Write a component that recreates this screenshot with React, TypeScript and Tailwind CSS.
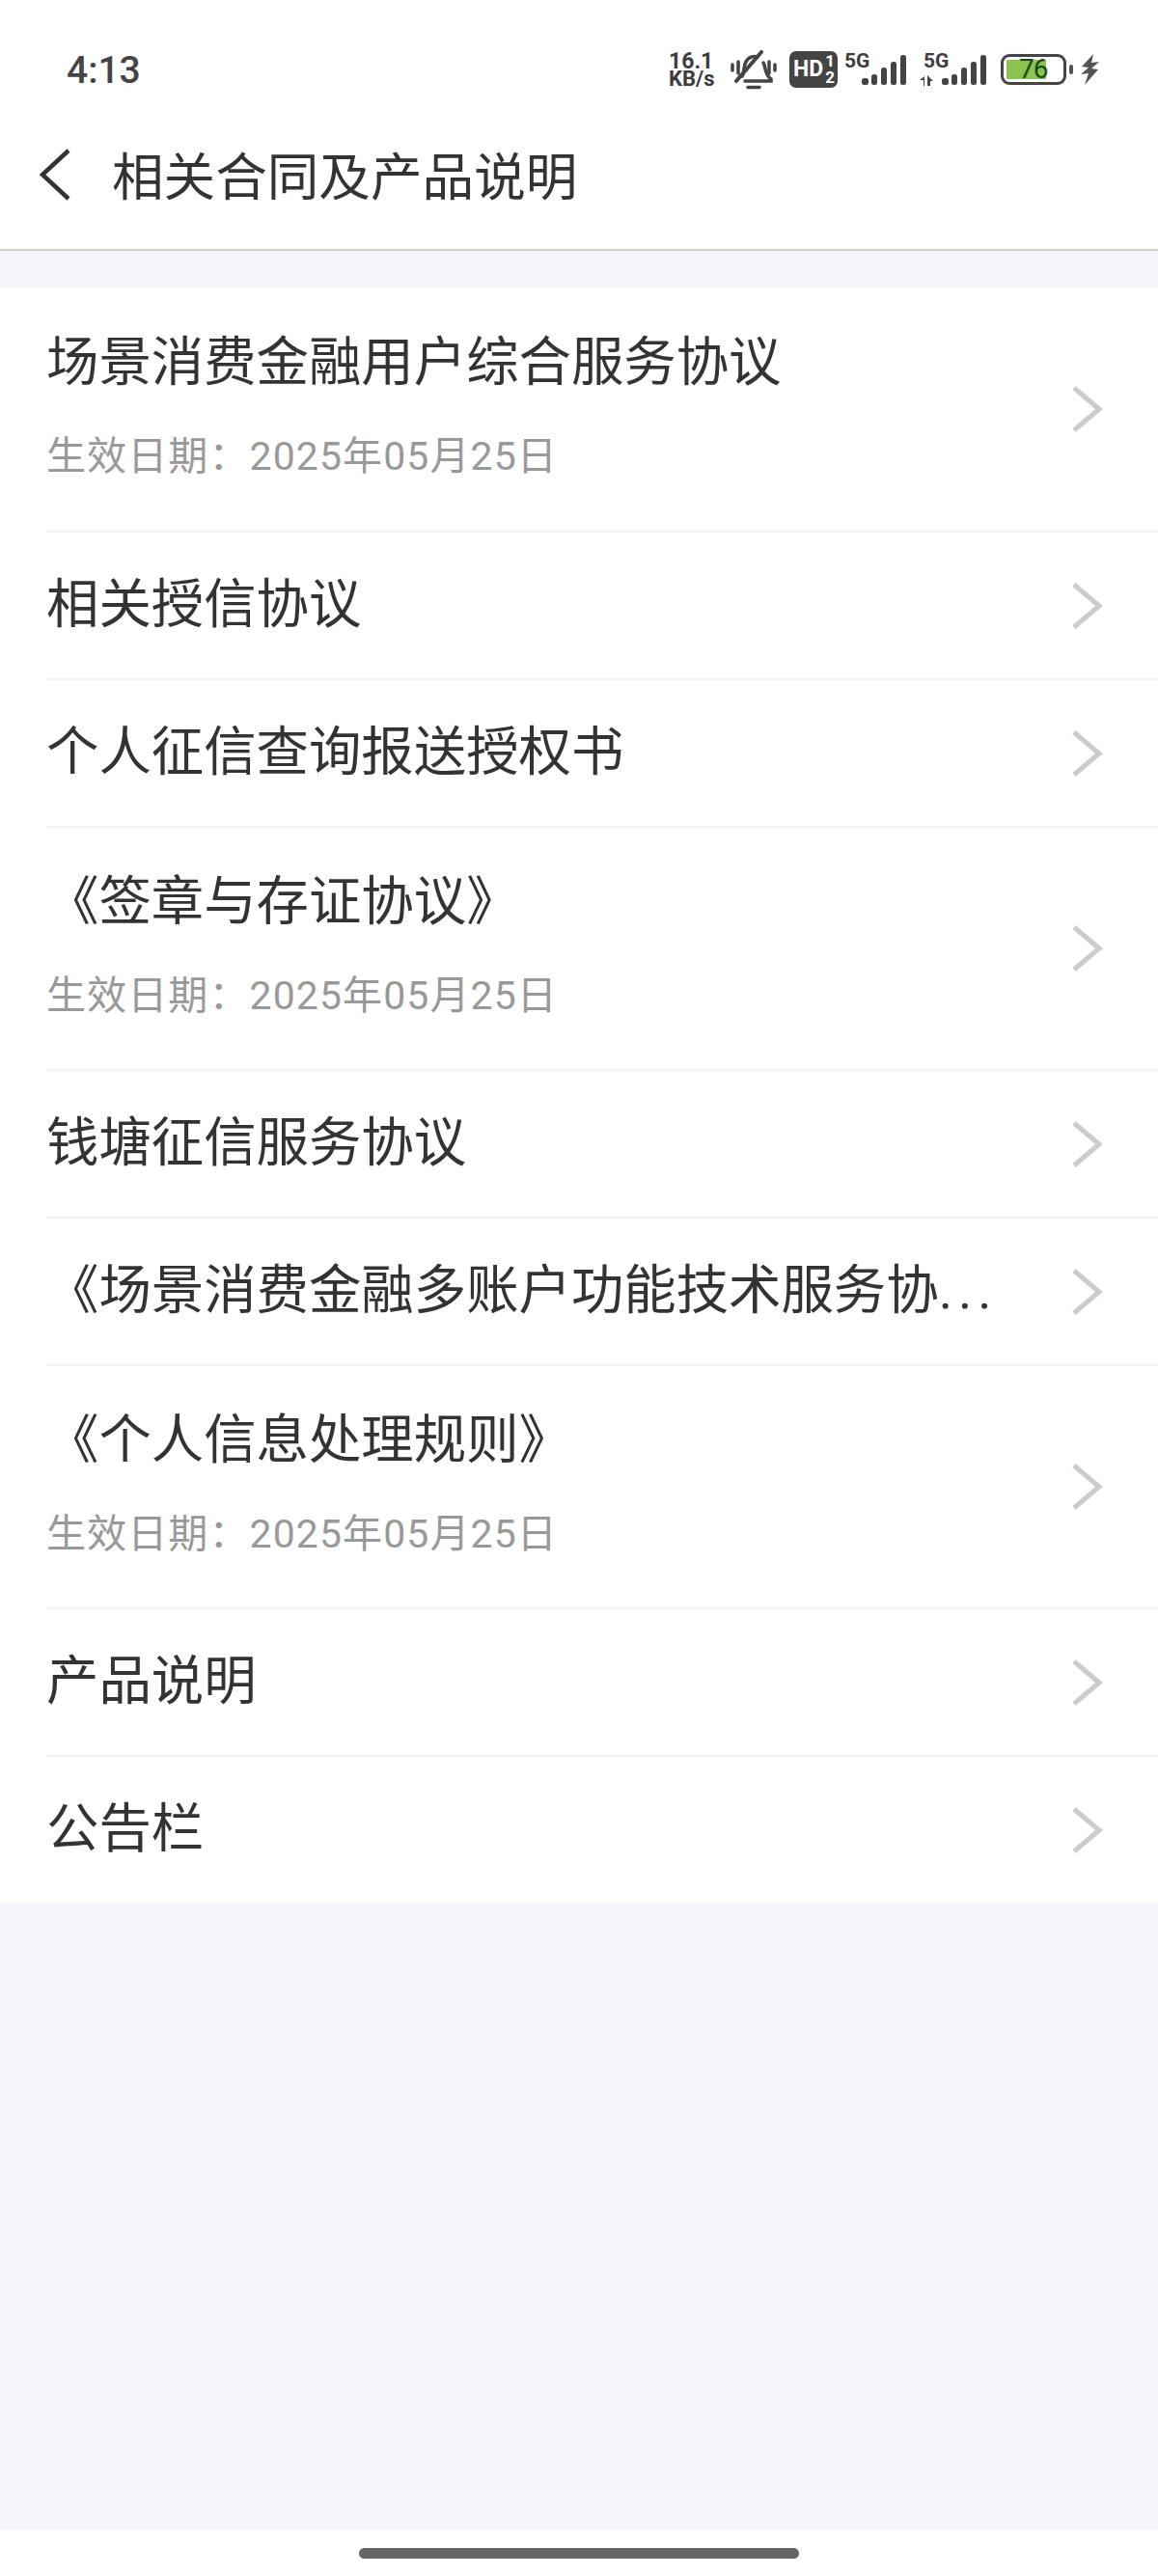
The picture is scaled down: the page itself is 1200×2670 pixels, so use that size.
const fontStack = "font-['Roboto','Noto_Sans_CJK_SC',sans-serif]";

type Item = {
  title: string;
  date?: string;
  clipped?: boolean;
};

const items: Item[] = [
  { title: "场景消费金融用户综合服务协议", date: "生效日期：2025年05月25日" },
  { title: "相关授信协议" },
  { title: "个人征信查询报送授权书" },
  { title: "《签章与存证协议》", date: "生效日期：2025年05月25日" },
  { title: "钱塘征信服务协议" },
  { title: "《场景消费金融多账户功能技术服务协", clipped: true },
  { title: "《个人信息处理规则》", date: "生效日期：2025年05月25日" },
  { title: "产品说明" },
  { title: "公告栏" },
];

function Signal({ arrows }: { arrows?: boolean }) {
  const dx = arrows ? 5 : 0;
  return (
    <div className={`relative h-[33px] ${arrows ? "w-[69px]" : "w-[64px]"}`}>
      <span
        className={`absolute top-[-5px] text-[21px] leading-[25px] font-bold text-[#3d3d3d] ${
          arrows ? "left-[4px]" : "left-0"
        }`}
      >
        5G
      </span>
      <svg width="69" height="33" viewBox="0 0 69 33" fill="#444" className="absolute left-0 top-0">
        {arrows ? <path d="M0 27l5-4v10l-1 0v-6zM8 22l6 6h-3v5H8z" /> : null}
        <rect x={18 + dx} y="25" width="7" height="7" rx="2.500" />
        <rect x={28 + dx} y="21" width="6" height="11" rx="2.500" />
        <rect x={38 + dx} y="14" width="6" height="18" rx="2.500" />
        <rect x={48 + dx} y="8" width="6" height="24" rx="2.500" />
        <rect x={58 + dx} y="1" width="6" height="31" rx="2.500" />
      </svg>
    </div>
  );
}

function BellOff() {
  return (
    <svg width="48" height="41" viewBox="0 0 48 41" fill="none" stroke="#444" strokeWidth="3.500" strokeLinecap="round">
      <path d="M12 27c3-5 1-10 4-15 3-5 8-6 12-5" />
      <path d="M34 13c3 5 1 12 8 17v2H15" />
      <path d="M32 2 6 32" strokeWidth="4" />
      <path d="M18 38.500h12" strokeWidth="3.500" />
      <path d="M2 15v6M8 12v12M40 12v12M46 15v6" strokeWidth="3.500" />
    </svg>
  );
}

function Chevron() {
  return (
    <svg width="32" height="48" viewBox="0 0 32 48" fill="none" className="shrink-0">
      <path d="M2 2 28 24 2 46" stroke="#cccccc" strokeWidth="5" />
    </svg>
  );
}

function StatusBar() {
  return (
    <div className="mt-[40px] flex h-[64px] items-center justify-between pl-[69px] pr-[61px] font-['Roboto',sans-serif] text-[#444]">
      <span className="pt-[2px] text-[39px] leading-[48px] font-medium">4:13</span>
      <div className="flex items-center">
        <div className="w-[50px] pt-[1px] text-[#3d3d3d] font-bold">
          <div className="text-[23px] leading-[19px]">16.1</div>
          <div className="text-[22px] leading-[18px]">KB/s</div>
        </div>
        <div className="ml-[14px] flex">
          <BellOff />
        </div>
        <div className="ml-[13px] flex h-[38px] w-[50px] items-center rounded-[7px] bg-[#444] pl-[4px] font-bold text-white">
          <span className="text-[23px] leading-[30px]">HD</span>
          <div className="ml-[2px] text-center text-[17px] leading-[17px]">
            <div>1</div>
            <div>2</div>
          </div>
        </div>
        <div className="ml-[7px] mt-[1px]">
          <Signal />
        </div>
        <div className="ml-[14px] mt-[1px]">
          <Signal arrows />
        </div>
        <div className="relative ml-[15px] h-[32px] w-[68px] rounded-[9px] border-[3.5px] border-[#444] p-[3px]">
          <div className="h-full w-[41px] bg-[#8ac44e]" />
          <span className="absolute left-[16px] top-[-3px] text-[28px] leading-[32px] tracking-[-1px] text-[#1a4a10]">
            76
          </span>
        </div>
        <div className="ml-[3px] h-[10px] w-[4px] rounded-[2px] bg-[#555]" />
        <svg width="19" height="32" viewBox="0 0 19 32" fill="#555" className="ml-[8px]">
          <path d="M13 0 1 13l7 1-8 7 8-1-4 12 14-16-7-1 8-7-8 1z" />
        </svg>
      </div>
    </div>
  );
}

export default function App() {
  return (
    <div className={`flex min-h-[2670px] w-[1200px] flex-col bg-white ${fontStack}`}>
      <StatusBar />
      <div className="flex h-[156px] items-center border-b-[2px] border-[#cfcfcf]">
        <svg width="34" height="54" viewBox="0 0 34 54" fill="none" className="ml-[40px]">
          <path d="M31 2 4 27l27 25" stroke="#333333" strokeWidth="4.500" />
        </svg>
        <h1 className="ml-[42px] pt-[8px] text-[53.6px] leading-[80px] font-normal text-[#333]">
          相关合同及产品说明
        </h1>
      </div>

      <main className="flex-1 bg-[#f5f5fa] pt-[38px]">
        <ul className="bg-white">
          {items.map((item, i) => (
            <li key={item.title} className="pl-[48px]">
              <div
                className={`flex items-center pr-[57px] ${item.date ? "h-[252px]" : "h-[153px]"} ${
                  i > 0 ? "border-t-[2px] border-[#f2f2f2]" : ""
                }`}
              >
                <div className={`min-w-0 flex-1 ${item.date ? "pb-[11px]" : "pb-[2px]"}`}>
                  <div className="whitespace-nowrap text-[54.4px] leading-[80px] text-[#333]">
                    {item.title}
                    {item.clipped ? <span className="tracking-[6px]">...</span> : null}
                  </div>
                  {item.date ? (
                    <div className="mt-[28px] text-[41px] leading-[58px] tracking-[1.1px] text-[#999]">
                      {item.date}
                    </div>
                  ) : null}
                </div>
                <Chevron />
              </div>
            </li>
          ))}
        </ul>
      </main>

      <div className="flex h-[48px] justify-center bg-white pt-[19px]">
        <div className="h-[11px] w-[456px] rounded-full bg-[#666]" />
      </div>
    </div>
  );
}
